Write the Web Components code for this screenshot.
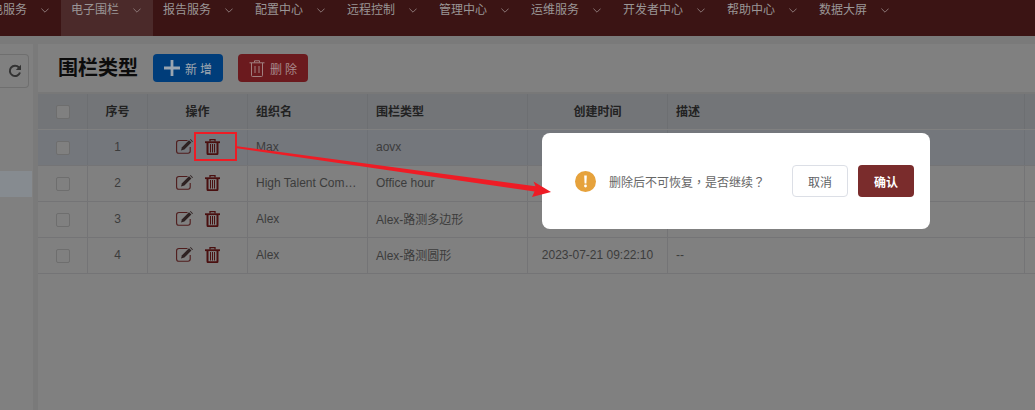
<!DOCTYPE html>
<html lang="zh">
<head>
<meta charset="utf-8">
<style>
  html, body { margin: 0; height: 100%; overflow: hidden; }
  body {
    font: 12px "Liberation Sans", "Noto Sans CJK SC", sans-serif;
    display: flex;
    flex-direction: column;
    background: #7a7a7a;
  }
</style>
</head>
<body>
<top-nav></top-nav>
<page-main></page-main>
<confirm-dialog>删除后不可恢复<span lang="zh-Hant">，</span>是否继续<span lang="zh-Hant">？</span></confirm-dialog>
<mark-up></mark-up>

<script>
// colours below are the page as seen under the modal's grey backdrop
const trashIcon = `<svg width="15" height="16" viewBox="0 0 15 16" fill="none" stroke="currentColor">
  <path d="M5 2.4V.7h5v1.7" stroke-width="1.3"/>
  <path d="M0 3.2h15" stroke-width="1.8"/>
  <path d="M2.5 4v10.2q0 1 1 1h8q1 0 1-1V4" stroke-width="2"/>
  <path d="M5.5 5v8.5M7.5 5v8.5M9.5 5v8.5" stroke-width="1"/>
</svg>`

const editIcon = `<svg width="18" height="15" viewBox="0 0 18 15" fill="none">
  <path d="M11.5 1.5H3Q.6 1.5.6 3.7v8.2q0 2.4 2.4 2.4h9q2.2 0 2.2-2.2V8" stroke="#4f1c1c" stroke-width="1.1"/>
  <path d="M5 11.5l1-3.3L13 1.2l2.4 2.4-7 7z" fill="#2e2222"/>
  <path d="M14 .4l.6-.4 2.4 2.4-.8.6z" fill="#2e2222"/>
</svg>`

customElements.define('nav-item',
  class extends HTMLElement {
    constructor() {
      super()
      this.attachShadow({ mode: 'open' }).innerHTML = `
<style>
  :host {
    display: flex;
    box-sizing: border-box;
    width: 92px;
    height: 36px;
    padding: 3px 0 0 10px;
    color: #9a9696;
    font-size: 12px;
    line-height: 14px;
  }
  :host([active]) { background: #4b2a2a; }
  svg { margin: 5px 0 0 14px; }
</style>
<span><slot></slot></span>
<svg width="8" height="5" viewBox="0 0 8 5" fill="none" stroke="#8a7676" stroke-width="1"><path d="M.4.6L4 4.2 7.6.6"/></svg>`
    }
  }
)

customElements.define('top-nav',
  class extends HTMLElement {
    constructor() {
      super()
      this.attachShadow({ mode: 'open' }).innerHTML = `
<style>
  :host {
    display: flex;
    flex: none;
    height: 36px;
    background: #3b1414;
    overflow: hidden;
  }
  nav { display: flex; margin-left: -31px; }
  .wide { width: 104px; }
</style>
<nav>
  <nav-item>充电服务</nav-item>
  <nav-item active>电子围栏</nav-item>
  <nav-item>报告服务</nav-item>
  <nav-item>配置中心</nav-item>
  <nav-item>远程控制</nav-item>
  <nav-item>管理中心</nav-item>
  <nav-item>运维服务</nav-item>
  <nav-item class="wide">开发者中心</nav-item>
  <nav-item>帮助中心</nav-item>
  <nav-item>数据大屏</nav-item>
</nav>`
    }
  }
)

customElements.define('side-rail',
  class extends HTMLElement {
    constructor() {
      super()
      this.attachShadow({ mode: 'open' }).innerHTML = `
<style>
  :host {
    display: flex;
    flex-direction: column;
    flex: none;
    box-sizing: border-box;
    width: 33px;
    background: #808080;
    padding-top: 10px;
  }
  .refresh {
    display: flex;
    align-items: center;
    justify-content: flex-end;
    box-sizing: border-box;
    width: 29px;
    height: 34px;
    padding-right: 6px;
    border: 1px solid #6f6f6f;
    border-left: 0;
    border-radius: 0 4px 4px 0;
    color: #333;
  }
  .selected {
    height: 26px;
    margin-top: 83px;
    width: 32px;
    background: #868b90;
  }
</style>
<div class="refresh">
  <svg width="14" height="14" viewBox="0 0 14 14" fill="none" stroke="currentColor" stroke-width="2">
    <path d="M12 8.5A5.2 5.2 0 1 1 11 3.5"/>
    <path d="M13 .8v5.2H7.8z" fill="currentColor" stroke="none"/>
  </svg>
</div>
<div class="selected"></div>`
    }
  }
)

customElements.define('fence-toolbar',
  class extends HTMLElement {
    constructor() {
      super()
      this.attachShadow({ mode: 'open' }).innerHTML = `
<style>
  :host {
    display: flex;
    align-items: center;
    flex: none;
    box-sizing: border-box;
    height: 50px;
    padding-left: 20px;
    background: #808080;
    border-bottom: 2px solid #787878;
  }
  h1 {
    margin: 0 15px 0 0;
    font-size: 20px;
    line-height: 28px;
    font-weight: 700;
    color: #0c0c0c;
  }
  button {
    display: flex;
    align-items: center;
    gap: 5px;
    box-sizing: border-box;
    width: 70px;
    height: 28px;
    padding: 0 0 0 11px;
    border: 0;
    border-radius: 4px;
    font: inherit;
    letter-spacing: 3px;
  }
  .add { background: #003d7a; color: #a0a8b0; }
  .del { background: #6b1a1e; color: #a88a8c; margin-left: 15px; }
</style>
<h1>围栏类型</h1>
<button class="add">
  <svg width="16" height="16" viewBox="0 0 16 16" fill="#9aa5b0"><path d="M6.6 0h2.8v6.6H16v2.8H9.4V16H6.6V9.4H0V6.6h6.6z"/></svg>
  <span>新增</span>
</button>
<button class="del">
  <svg width="16" height="17" viewBox="0 0 16 17" fill="none" stroke="#a08080" stroke-width="1">
    <path d="M5.5 2.5V.8h5v1.7M.5 2.8h15M2.5 3v12.5q0 1 1 1h9q1 0 1-1V3M6 6v7M10 6v7"/>
  </svg>
  <span>删除</span>
</button>`
    }
  }
)

customElements.define('fence-table',
  class extends HTMLElement {
    constructor() {
      super()
      // time and note of the first three rows sit behind the dialog
      const rows = [
        ['1', 'Max', 'aovx', '', ''],
        ['2', 'High Talent Company', 'Office hour', '', ''],
        ['3', 'Alex', 'Alex-路测多边形', '', ''],
        ['4', 'Alex', 'Alex-路测圆形', '2023-07-21 09:22:10', '--']
      ]
      const box = '<span class="box"></span>'
      const body = rows.map(([no, org, type, time, note], i) => `
  <div class="row${i === 0 ? ' hover' : ''}">
    <div class="cell mid plain">${box}</div>
    <div class="cell mid">${no}</div>
    <div class="cell mid ops"><i>${editIcon}</i><i class="trash">${trashIcon}</i></div>
    <div class="cell"><span class="clip">${org}</span></div>
    <div class="cell">${type}</div>
    <div class="cell mid">${time}</div>
    <div class="cell">${note}</div>
    <div class="cell end"></div>
  </div>`).join('')
      this.attachShadow({ mode: 'open' }).innerHTML = `
<style>
  :host { display: block; background: #808080; flex: 1; color: #3c3c3c; font-size: 12px; }
  .row {
    display: grid;
    grid-template-columns: 50px 60px 100px 120px 160px 140px 357px 10px;
    height: 36px;
    box-sizing: border-box;
    border-bottom: 1px solid #747476;
  }
  .head { background: #737578; color: #222; font-weight: 600; height: 35px; margin-bottom: 1px; border-bottom: 0; }
  .hover { background: #74777c; }
  .cell {
    display: flex;
    align-items: center;
    box-sizing: border-box;
    padding: 0 0 2px 8px;
    min-width: 0;
    border-right: 1px solid #747476;
    white-space: nowrap;
  }
  .head .cell { border-right-color: #6d6f72; }
  .hover .cell { border-right-color: #6e7176; }
  .mid { justify-content: center; padding-left: 0; }
  .plain { padding-bottom: 0; }
  .end { border-right: 0; }
  .clip { display: block; width: 105px; overflow: hidden; text-overflow: ellipsis; }
  .box {
    box-sizing: border-box;
    width: 14px;
    height: 14px;
    background: #808080;
    border: 1px solid #6e6e6e;
    border-radius: 2px;
  }
  .ops { justify-content: flex-start; padding-left: 28px; color: #4a1010; }
  .ops i { display: flex; }
  .trash { margin-left: 11px; }
</style>
<div class="row head">
  <div class="cell mid plain">${box}</div>
  <div class="cell mid">序号</div>
  <div class="cell mid">操作</div>
  <div class="cell">组织名</div>
  <div class="cell">围栏类型</div>
  <div class="cell mid">创建时间</div>
  <div class="cell">描述</div>
  <div class="cell end"></div>
</div>${body}`
    }
  }
)

customElements.define('page-main',
  class extends HTMLElement {
    constructor() {
      super()
      this.attachShadow({ mode: 'open' }).innerHTML = `
<style>
  :host {
    display: flex;
    flex: 1;
    gap: 5px;
    min-height: 0;
    padding-top: 8px;
    background: #7a7a7a;
  }
  .content { display: flex; flex-direction: column; flex: 1; min-width: 0; background: #808080; }
</style>
<side-rail></side-rail>
<div class="content">
  <fence-toolbar></fence-toolbar>
  <fence-table></fence-table>
</div>`
    }
  }
)

customElements.define('confirm-dialog',
  class extends HTMLElement {
    constructor() {
      super()
      this.attachShadow({ mode: 'open' }).innerHTML = `
<style>
  :host {
    position: fixed;
    z-index: 11;
    left: 542px;
    top: 133px;
    width: 388px;
    height: 96px;
    display: flex;
    align-items: center;
    box-sizing: border-box;
    padding: 0 16px 0 33px;
    background: #fff;
    border-radius: 8px;
    color: #666;
    font-size: 12px;
  }
  svg { flex: none; }
  .text { flex: 1; margin-left: 13px; white-space: nowrap; }
  ::slotted(span) { font-family: "Noto Sans CJK TC", sans-serif; }
  button {
    box-sizing: border-box;
    width: 56px;
    height: 32px;
    padding: 0;
    border-radius: 4px;
    font: inherit;
  }
  .cancel { background: #fff; border: 1px solid #dcdfe6; color: #606266; }
  .ok { margin-left: 10px; background: #7a2c2c; border: 0; color: #fff; font-weight: 700; }
</style>
<svg width="21" height="21" viewBox="0 0 21 21">
  <circle cx="10.5" cy="10.5" r="10.5" fill="#e6a23c"/>
  <path d="M9.2 4.5h2.6l-.4 8h-1.8z" fill="#fff"/>
  <circle cx="10.5" cy="15" r="1.4" fill="#fff"/>
</svg>
<span class="text"><slot></slot></span>
<button class="cancel">取消</button>
<button class="ok">确认</button>`
    }
  }
)

customElements.define('mark-up',
  class extends HTMLElement {
    constructor() {
      super()
      this.attachShadow({ mode: 'open' }).innerHTML = `
<style>
  :host { position: fixed; inset: 0; z-index: 12; pointer-events: none; }
  svg { display: block; }
</style>
<svg width="1035" height="410" viewBox="0 0 1035 410">
  <rect x="195" y="133" width="41" height="27" fill="none" stroke="#ee1c25" stroke-width="2"/>
  <path d="M237 146.3L535.5 186.2 533.5 181.5 551 192 532 197 534.5 191.4 237 148.3z" fill="#ee1c25"/>
</svg>`
    }
  }
)
</script>
</body>
</html>
